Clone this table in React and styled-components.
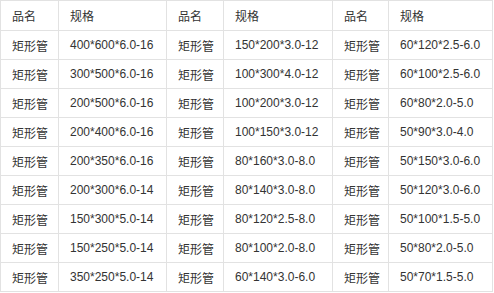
import { Fragment } from "react";
import styled, { createGlobalStyle } from "styled-components";

const GlobalStyle = createGlobalStyle`
  body {
    margin: 0;
    background: #fff;
  }
`;

const rows = [
  ["400*600*6.0-16", "150*200*3.0-12", "60*120*2.5-6.0"],
  ["300*500*6.0-16", "100*300*4.0-12", "60*100*2.5-6.0"],
  ["200*500*6.0-16", "100*200*3.0-12", "60*80*2.0-5.0"],
  ["200*400*6.0-16", "100*150*3.0-12", "50*90*3.0-4.0"],
  ["200*350*6.0-16", "80*160*3.0-8.0", "50*150*3.0-6.0"],
  ["200*300*6.0-14", "80*140*3.0-8.0", "50*120*3.0-6.0"],
  ["150*300*5.0-14", "80*120*2.5-8.0", "50*100*1.5-5.0"],
  ["150*250*5.0-14", "80*100*2.0-8.0", "50*80*2.0-5.0"],
  ["350*250*5.0-14", "60*140*3.0-6.0", "50*70*1.5-5.0"],
];

const widths = [58, 108, 57, 109, 56, 104];

export default function App() {
  return (
    <>
      <GlobalStyle />
      <Table>
        <colgroup>
          {widths.map((w, i) => (
            <col key={i} style={{ width: w }} />
          ))}
        </colgroup>
        <tbody>
          <Row>
            {[0, 1, 2].map((i) => (
              <Fragment key={i}>
                <Cell>品名</Cell>
                <Cell>规格</Cell>
              </Fragment>
            ))}
          </Row>
          {rows.map((r, ri) => (
            <Row key={ri}>
              {r.map((spec, ci) => (
                <Fragment key={ci}>
                  <Cell>矩形管</Cell>
                  <Cell>{spec}</Cell>
                </Fragment>
              ))}
            </Row>
          ))}
        </tbody>
      </Table>
    </>
  );
}

const Table = styled.table`
  border-collapse: collapse;
  table-layout: fixed;
  width: 493px;
  font-family: "Liberation Sans", "Noto Sans CJK SC", sans-serif;
  font-size: 12px;
  color: #333;
`;

const Row = styled.tr`
  height: 29px;

  &:first-child {
    height: 30px;
  }
`;

const Cell = styled.td`
  border: 1px solid #e2e2e2;
  padding: 0 0 0 11px;
  vertical-align: middle;
  white-space: nowrap;
`;
